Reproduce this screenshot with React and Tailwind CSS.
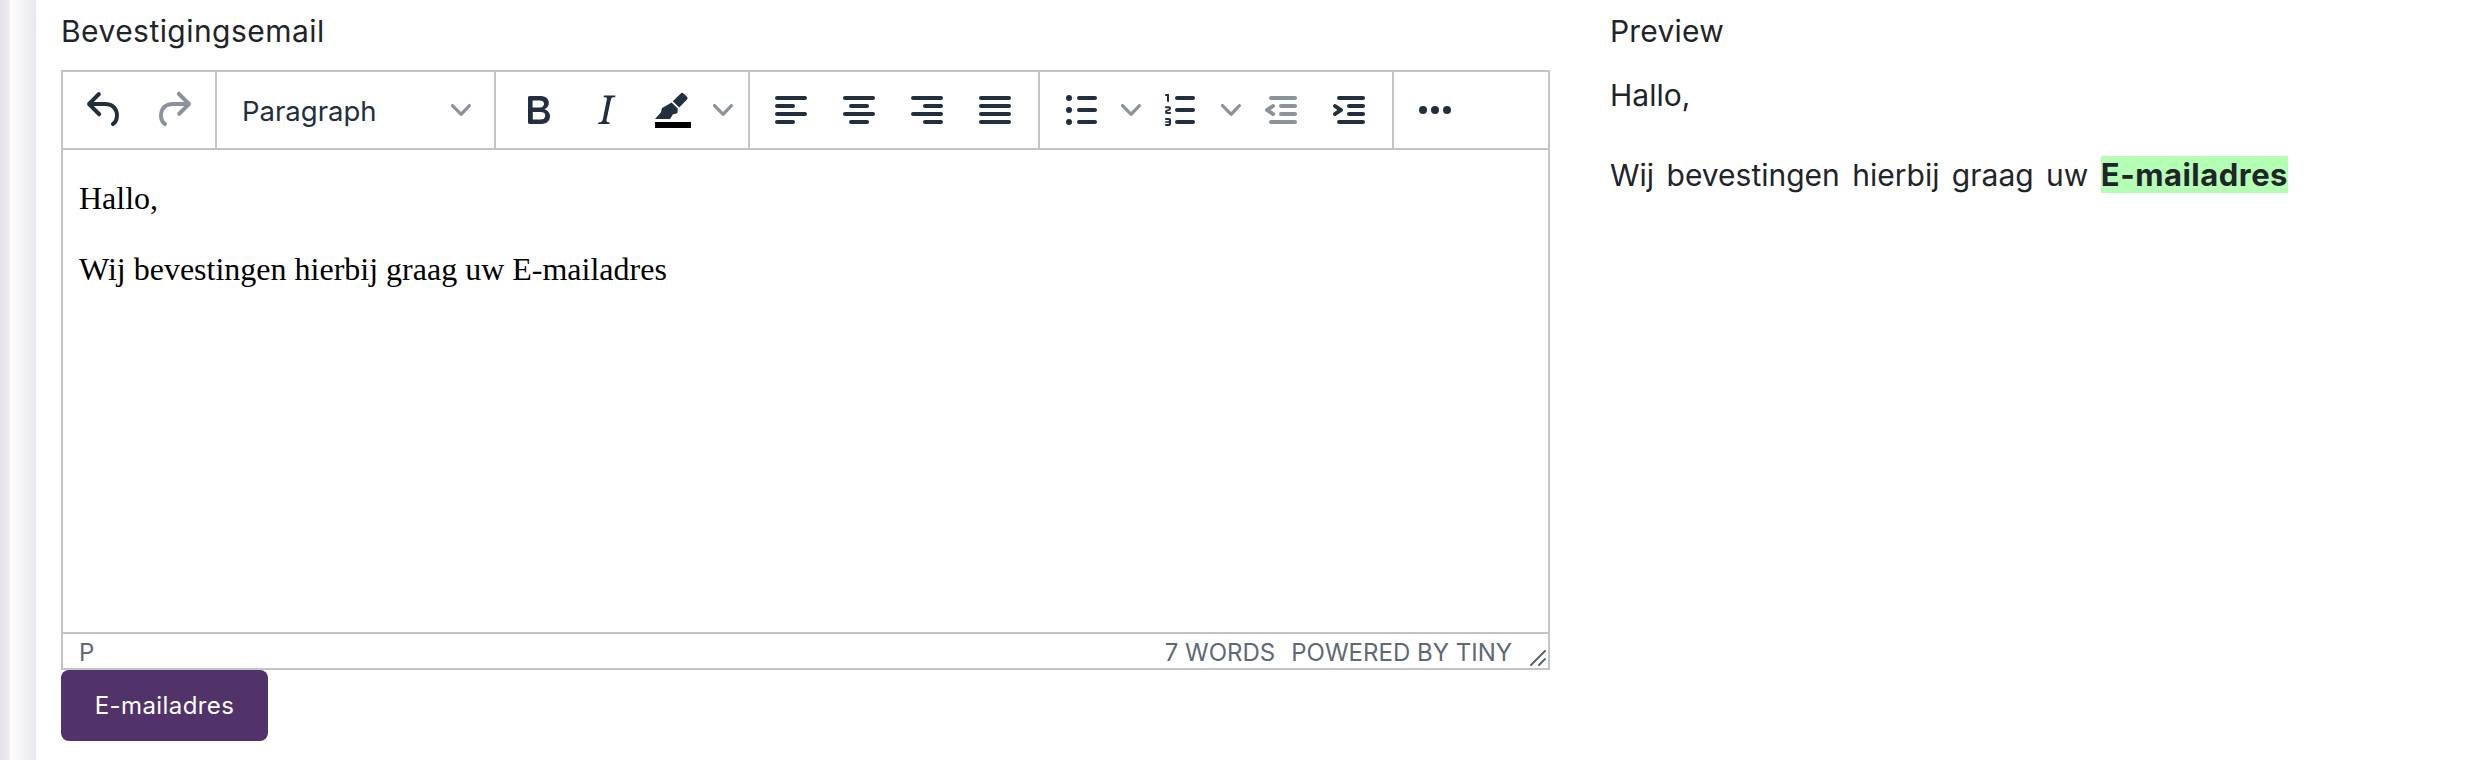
import React from "react";

const ICON = "#222f3e";
const MUTED = "#8b929b";

const paths = {
  undo: "M6.4 8H12c3.7 0 6.2 2 6.8 5.1.6 2.7-.4 5.6-2.3 6.8a1 1 0 0 1-1-1.8c1.1-.7 1.8-2.7 1.4-4.6-.5-2.1-2.1-3.5-4.9-3.5H6.4l3.3 3.3a1 1 0 1 1-1.4 1.4l-5-5a1 1 0 0 1 0-1.4l5-5a1 1 0 0 1 1.4 1.4L6.4 8Z",
  redo: "M17.6 10H12c-2.8 0-4.4 1.4-4.9 3.5-.4 2 .3 4 1.4 4.6a1 1 0 1 1-1 1.8c-2-1.2-2.9-4.1-2.3-6.8.6-3 3-5.1 6.8-5.1h5.6l-3.3-3.3a1 1 0 1 1 1.4-1.4l5 5a1 1 0 0 1 0 1.4l-5 5a1 1 0 0 1-1.4-1.4l3.3-3.3Z",
  bold: "M7.8 19c-.3 0-.5 0-.6-.2l-.2-.5V5.7c0-.2 0-.4.2-.5l.6-.2h5c1.5 0 2.7.3 3.5 1 .7.6 1.1 1.4 1.1 2.5a3 3 0 0 1-.6 1.9c-.4.6-1 1-1.6 1.2.4.1.9.3 1.3.6s.8.7 1 1.2c.4.4.5 1 .5 1.6 0 1.3-.4 2.3-1.3 3-.8.7-2.1 1-3.8 1H7.8Zm5-8.3c.6 0 1.2-.1 1.6-.5.4-.3.6-.7.6-1.3 0-1.1-.8-1.7-2.3-1.7H9.3v3.5h3.4Zm.5 6c.7 0 1.3-.1 1.7-.4.4-.4.6-.9.6-1.5s-.2-1-.7-1.4c-.4-.3-1-.4-2-.4H9.4v3.8h4Z",
  italic: "m16.7 4.7-.1.9h-.3c-.6 0-1 0-1.4.3-.3.3-.4.6-.5 1.1l-2.1 9.8v.6c0 .5.4.8 1.4.8h.2l-.2.8H8l.2-.8h.2c1.1 0 1.8-.5 2-1.5l2-9.8.1-.5c0-.6-.4-.8-1.4-.8h-.3l.2-.9h5.8Z",
  pen: "M15.9 3.7a1 1 0 0 1 1.4 0l1.7 1.7a1 1 0 0 1 0 1.4l-3.9 4-3.2-3.2 4-3.9ZM11.3 8.2l3.1 3.1-.2 2.3-2.2.5-1.5 2.4H3l3-3.4.4-2 4.9-2.9Z",
  alignLeft: "M5 5h14c.6 0 1 .4 1 1s-.4 1-1 1H5a1 1 0 1 1 0-2Zm0 4h8c.6 0 1 .4 1 1s-.4 1-1 1H5a1 1 0 1 1 0-2Zm0 8h8c.6 0 1 .4 1 1s-.4 1-1 1H5a1 1 0 0 1 0-2Zm0-4h14c.6 0 1 .4 1 1s-.4 1-1 1H5a1 1 0 0 1 0-2Z",
  alignCenter: "M5 5h14c.6 0 1 .4 1 1s-.4 1-1 1H5a1 1 0 1 1 0-2Zm3 4h8c.6 0 1 .4 1 1s-.4 1-1 1H8a1 1 0 1 1 0-2Zm0 8h8c.6 0 1 .4 1 1s-.4 1-1 1H8a1 1 0 0 1 0-2Zm-3-4h14c.6 0 1 .4 1 1s-.4 1-1 1H5a1 1 0 0 1 0-2Z",
  alignRight: "M5 5h14c.6 0 1 .4 1 1s-.4 1-1 1H5a1 1 0 1 1 0-2Zm6 4h8c.6 0 1 .4 1 1s-.4 1-1 1h-8a1 1 0 0 1 0-2Zm0 8h8c.6 0 1 .4 1 1s-.4 1-1 1h-8a1 1 0 0 1 0-2Zm-6-4h14c.6 0 1 .4 1 1s-.4 1-1 1H5a1 1 0 0 1 0-2Z",
  justify: "M5 5h14c.6 0 1 .4 1 1s-.4 1-1 1H5a1 1 0 1 1 0-2Zm0 4h14c.6 0 1 .4 1 1s-.4 1-1 1H5a1 1 0 1 1 0-2Zm0 4h14c.6 0 1 .4 1 1s-.4 1-1 1H5a1 1 0 0 1 0-2Zm0 4h14c.6 0 1 .4 1 1s-.4 1-1 1H5a1 1 0 0 1 0-2Z",
  bullets: "M11 5h8c.6 0 1 .4 1 1s-.4 1-1 1h-8a1 1 0 0 1 0-2Zm0 6h8c.6 0 1 .4 1 1s-.4 1-1 1h-8a1 1 0 0 1 0-2Zm0 6h8c.6 0 1 .4 1 1s-.4 1-1 1h-8a1 1 0 0 1 0-2ZM4.5 6a1.5 1.5 0 1 1 3 0 1.5 1.5 0 0 1-3 0Zm0 6a1.5 1.5 0 1 1 3 0 1.5 1.5 0 0 1-3 0Zm0 6a1.5 1.5 0 1 1 3 0 1.5 1.5 0 0 1-3 0Z",
  numbers: "M10 17h8c.6 0 1 .4 1 1s-.4 1-1 1h-8a1 1 0 0 1 0-2Zm0-6h8c.6 0 1 .4 1 1s-.4 1-1 1h-8a1 1 0 0 1 0-2Zm0-6h8c.6 0 1 .4 1 1s-.4 1-1 1h-8a1 1 0 1 1 0-2ZM6 4v3.5c0 .3-.2.5-.5.5a.5.5 0 0 1-.5-.5V5h-.5a.5.5 0 0 1 0-1H6Zm-1 8.8.2.2h1.3c.3 0 .5.2.5.5s-.2.5-.5.5H4.9a1 1 0 0 1-.9-1V13c0-.4.3-.8.6-1l1.2-.4.2-.3a.2.2 0 0 0-.2-.2H4.5a.5.5 0 0 1-.5-.5c0-.3.2-.5.5-.5h1.6c.5 0 .9.4.9 1v.1c0 .4-.3.8-.6 1l-1.2.4-.2.3ZM7 17v2c0 .6-.4 1-1 1H4.5a.5.5 0 0 1 0-1h1.2c.2 0 .3-.1.3-.3 0-.2-.1-.3-.3-.3H4.4a.4.4 0 1 1 0-.8h1.3c.2 0 .3-.1.3-.3 0-.2-.1-.3-.3-.3H4.5a.5.5 0 1 1 0-1H6c.6 0 1 .4 1 1Z",
  outdent: "M7 5h12c.6 0 1 .4 1 1s-.4 1-1 1H7a1 1 0 1 1 0-2Zm5 4h7c.6 0 1 .4 1 1s-.4 1-1 1h-7a1 1 0 0 1 0-2Zm0 4h7c.6 0 1 .4 1 1s-.4 1-1 1h-7a1 1 0 0 1 0-2Zm-5 4h12a1 1 0 0 1 0 2H7a1 1 0 0 1 0-2Zm1.6-3.8a1 1 0 0 1-1.2 1.6l-3-2a1 1 0 0 1 0-1.6l3-2a1 1 0 0 1 1.2 1.6L6.8 12l1.8 1.2Z",
  indent: "M7 5h12c.6 0 1 .4 1 1s-.4 1-1 1H7a1 1 0 1 1 0-2Zm5 4h7c.6 0 1 .4 1 1s-.4 1-1 1h-7a1 1 0 0 1 0-2Zm0 4h7c.6 0 1 .4 1 1s-.4 1-1 1h-7a1 1 0 0 1 0-2Zm-5 4h12a1 1 0 0 1 0 2H7a1 1 0 0 1 0-2Zm-2.6-3.8L6.2 12l-1.8-1.2a1 1 0 0 1 1.2-1.6l3 2a1 1 0 0 1 0 1.6l-3 2a1 1 0 1 1-1.2-1.6Z",
  more: "M6 10a2 2 0 1 0 0 4 2 2 0 0 0 0-4Zm12 0a2 2 0 1 0 0 4 2 2 0 0 0 0-4Zm-6 0a2 2 0 1 0 0 4 2 2 0 0 0 0-4Z",
};

const Icon = ({ name, muted, children }) => (
  <svg width="48" height="48" viewBox="0 0 24 24" fill={muted ? MUTED : ICON}>
    <path d={paths[name]} />
    {children}
  </svg>
);

const Chevron = () => (
  <svg width="20" height="20" viewBox="0 0 10 10" fill={MUTED}>
    <path d="M8.7 2.2c.3-.3.8-.3 1 0 .4.4.4.9 0 1.2L5.7 7.8c-.3.3-.9.3-1.2 0L.2 3.4a.8.8 0 0 1 0-1.2c.3-.3.8-.3 1.1 0L5 6l3.7-3.8Z" />
  </svg>
);

const Btn = ({ className, children }) => (
  <button type="button" className={`flex h-[76px] items-center justify-center ${className}`}>
    {children}
  </button>
);

const Group = ({ className, children }) => (
  <div className={`flex h-[76px] shrink-0 items-center border-r-2 border-[#c4c4c4] ${className}`}>
    {children}
  </div>
);

const Toolbar = () => (
  <div className="flex h-[78px] border-b-2 border-[#c4c4c4]">
    <Group className="w-[154px] pl-[8px]">
      <Btn className="w-[68px]"><Icon name="undo" /></Btn>
      <Btn className="w-[68px]"><Icon name="redo" muted /></Btn>
    </Group>
    <Group className="w-[279px] pl-[25px]">
      <span className="pt-[3px] text-[27.5px] text-[#222f3e]">Paragraph</span>
      <span className="ml-auto mr-[23px] flex"><Chevron /></span>
    </Group>
    <Group className="w-[254px] pl-[8px]">
      <Btn className="w-[68px]"><Icon name="bold" /></Btn>
      <Btn className="w-[68px]"><Icon name="italic" /></Btn>
      <Btn className="w-[66px]">
        <Icon name="pen"><rect x="3" y="18" width="18" height="3" fill="#000" /></Icon>
      </Btn>
      <Btn className="ml-[7px] w-[20px]"><Chevron /></Btn>
    </Group>
    <Group className="w-[290px] pl-[7px]">
      <Btn className="w-[68px]"><Icon name="alignLeft" /></Btn>
      <Btn className="w-[68px]"><Icon name="alignCenter" /></Btn>
      <Btn className="w-[68px]"><Icon name="alignRight" /></Btn>
      <Btn className="w-[68px]"><Icon name="justify" /></Btn>
    </Group>
    <Group className="w-[354px] pl-[7px]">
      <Btn className="w-[68px]"><Icon name="bullets" /></Btn>
      <Btn className="w-[32px]"><Chevron /></Btn>
      <Btn className="w-[68px]"><Icon name="numbers" /></Btn>
      <Btn className="w-[32px]"><Chevron /></Btn>
      <Btn className="w-[68px]"><Icon name="outdent" muted /></Btn>
      <Btn className="w-[68px]"><Icon name="indent" /></Btn>
    </Group>
    <div className="flex h-[76px] pl-[7px]">
      <Btn className="w-[68px]"><Icon name="more" /></Btn>
    </div>
  </div>
);

const Editor = () => (
  <div className="relative flex h-[600px] w-[1489px] flex-col border-2 border-[#c4c4c4] bg-white">
    <Toolbar />
    <div className="flex-1 px-[16px] pt-[29px] font-['Liberation_Serif',serif] text-[32px] leading-[38px] text-black">
      <p>Hallo,</p>
      <p className="mt-[33px]">Wij bevestingen hierbij graag uw E-mailadres</p>
    </div>
    <div className="flex h-[36px] items-center border-t-2 border-[#c4c4c4] pl-[16px] pr-[36px] pt-[3px] text-[24px] text-[#5f6975]">
      <span>P</span>
      <span className="ml-auto">7 WORDS</span>
      <span className="ml-[16px]">POWERED BY TINY</span>
    </div>
    <svg className="absolute bottom-[2px] right-[2px]" width="16" height="16" viewBox="0 0 16 16" fill="none" stroke="#5a6572" strokeWidth="2" strokeLinecap="round">
      <path d="M1 15 15 1M9 15l6-6" />
    </svg>
  </div>
);

export default function App() {
  return (
    <div className="flex h-[760px] w-full bg-white font-['Inter',sans-serif] text-[#212529]">
      <div className="flex w-[36px] shrink-0">
        <div className="w-[10px] bg-gradient-to-r from-[#e4e1e9] to-[#f0eef3]" />
        <div className="flex-1 bg-gradient-to-r from-white to-[#e8e6ec]" />
      </div>
      <div className="ml-[25px] w-[1489px]">
        <label className="block h-[70px] pt-[12px] text-[30px] leading-[38px] tracking-[0.45px]">Bevestigingsemail</label>
        <Editor />
        <button type="button" className="flex h-[71px] w-[207px] items-center justify-center rounded-[8px] bg-[#513269] text-[24px] tracking-[0.4px] text-white">
          E-mailadres
        </button>
      </div>
      <div className="ml-[60px]">
        <div className="pt-[12px] text-[30px] leading-[38px] tracking-[0.2px]">Preview</div>
        <p className="mt-[26px] text-[30px] leading-[38px]">Hallo,</p>
        <p className="mt-[42px] text-[30px] leading-[38px] [word-spacing:4px]">
          Wij bevestingen hierbij graag uw <strong className="bg-[#b3ffb3] text-[31px] font-bold tracking-[0.5px]">E-mailadres</strong>
        </p>
      </div>
    </div>
  );
}
